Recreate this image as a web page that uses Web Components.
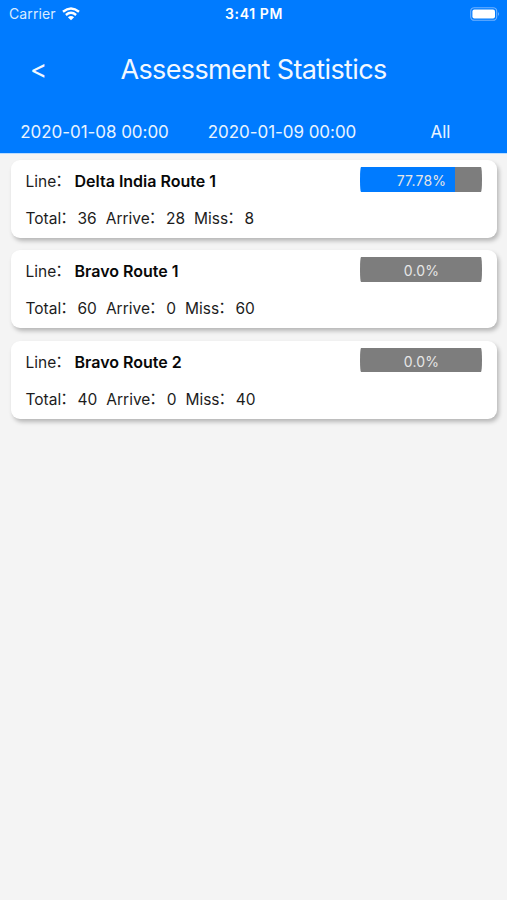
<!DOCTYPE html>
<html lang="en">
<head>
<meta charset="utf-8">
<title>Assessment Statistics</title>
<style>
body{margin:0;background:#f4f4f4;font-family:Inter,"Noto Sans CJK SC",sans-serif;color:#1c1c1c}
</style>
</head>
<body>
<assessment-page></assessment-page>
<script>
class BaseElement extends HTMLElement {
  render(html) {
    this.attachShadow({mode: "open"}).innerHTML = html;
  }
}

customElements.define("status-bar", class extends BaseElement {
  connectedCallback() {
    this.render(`
<style>
:host{display:grid;grid-template-columns:1fr auto 1fr;align-items:center;height:28px;box-sizing:border-box;padding:0 7px 0 9px;font-size:14px;line-height:28px;color:#fff}
.left{display:flex;align-items:center;gap:6px;color:#d9ebff}
.carrier{letter-spacing:.1px}
.time{font-weight:600;font-size:14px;letter-spacing:.6px;margin-right:1px}
svg{display:block}
.battery{justify-self:end}
</style>
<div class="left"><span class="carrier">Carrier</span>
<svg width="18" height="14" viewBox="0 0 18 14" fill="none" stroke="#fff" stroke-width="2.4"><path d="M1 4.7Q9-1.9 17 4.7"/><path d="M3.9 8Q9 3.7 14.1 8"/><path d="M9 13.2L5.9 10.2Q9 7.6 12.1 10.2Z" fill="#fff" stroke="none"/></svg></div>
<span class="time">3:41 PM</span>
<svg class="battery" width="30" height="14" viewBox="0 0 30 14"><rect x=".7" y=".7" width="26" height="12.6" rx="3.6" fill="none" stroke="#70b2ff" stroke-width="1.1"/><rect x="2.4" y="2.4" width="22.6" height="9.2" rx="2" fill="#fff"/><path d="M28 5Q30 7 28 9Z" fill="#70b2ff"/></svg>`);
  }
});

customElements.define("title-bar", class extends BaseElement {
  connectedCallback() {
    this.render(`
<style>
:host{display:grid;grid-template-columns:77px 1fr 77px;align-items:center;height:82px;color:#f2f8ff}
.back{text-align:center;font-size:26px;line-height:30px;padding-top:1px}
h1{margin:0;padding-top:2px;text-align:center;font-weight:400;font-size:27px;line-height:34px;letter-spacing:-.62px;white-space:nowrap}
</style>
<span class="back">&lt;</span><h1><slot></slot></h1>`);
  }
});

customElements.define("filter-bar", class extends BaseElement {
  connectedCallback() {
    this.render(`
<style>
:host{display:grid;grid-template-columns:189px 186px 131px;height:43px;text-align:center;font-size:17px;line-height:44px;letter-spacing:-.05px;color:#e8f3ff;white-space:nowrap;border-bottom:1px solid #b9dcff}
</style>
<slot></slot>`);
  }
});

customElements.define("rate-bar", class extends BaseElement {
  connectedCallback() {
    const rate = this.getAttribute("rate");
    this.render(`
<style>
:host{display:block;width:122px;height:24.5px;border-radius:1px/12px;text-align:center;font-size:14px;line-height:28px;letter-spacing:.2px;text-indent:1px;color:#e6e6e6;background:linear-gradient(90deg,#007bff ${rate}%,#7d7d7d ${rate}%)}
</style>${rate}%`);
  }
});

customElements.define("route-card", class extends BaseElement {
  connectedCallback() {
    const a = name => this.getAttribute(name);
    this.render(`
<style>
:host{display:block;box-sizing:border-box;height:78px;padding:7px 15px 0 14.5px;border-radius:9px;background:#fff;box-shadow:2px 3px 4px rgba(0,0,0,.25);font-size:15.5px;white-space:nowrap}
.top{display:flex;justify-content:space-between;height:25px}
.line{display:flex;line-height:28px}
.line span{padding-top:1px}
b{font-weight:600;font-size:16px;color:#080808;margin-left:2px}
.counts{display:flex;gap:9px;margin-top:13px;line-height:28px}
i{display:inline-block;width:16.3px;font-style:normal;line-height:28px;text-indent:-1px}
.counts i{line-height:24px;vertical-align:1px}
</style>
<div class="top"><div class="line"><span>Line</span><i>：</i><b>${a("name")}</b></div><rate-bar rate="${a("rate")}"></rate-bar></div>
<div class="counts"><span>Total<i>：</i>${a("total")}</span><span>Arrive<i>：</i>${a("arrive")}</span><span>Miss<i>：</i>${a("miss")}</span></div>`);
  }
});

customElements.define("assessment-page", class extends BaseElement {
  connectedCallback() {
    this.render(`
<style>
:host{display:block;min-height:900px}
header{background:#007bff}
main{display:grid;gap:12.3px;padding:6px 10px 0 11px}
</style>
<header><status-bar></status-bar><title-bar>Assessment Statistics</title-bar>
<filter-bar><span>2020-01-08 00:00</span><span>2020-01-09 00:00</span><span>All</span></filter-bar></header>
<main>
<route-card name="Delta India Route 1" rate="77.78" total="36" arrive="28" miss="8"></route-card>
<route-card name="Bravo Route 1" rate="0.0" total="60" arrive="0" miss="60"></route-card>
<route-card name="Bravo Route 2" rate="0.0" total="40" arrive="0" miss="40"></route-card>
</main>`);
  }
});
</script>
</body>
</html>
